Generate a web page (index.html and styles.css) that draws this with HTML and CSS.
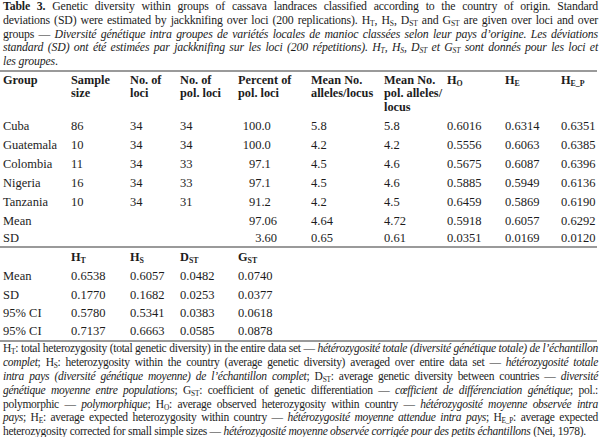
FILE: index.html
```html
<!DOCTYPE html>
<html>
<head>
<meta charset="utf-8">
<link rel="stylesheet" href="styles.css">
</head>
<body>
<div class="page">
  <p class="caption">
    <span class="ln"><b>Table 3.</b> Genetic diversity within groups of cassava landraces classified according to the country of origin. Standard</span>
    <span class="ln">deviations (SD) were estimated by jackknifing over loci (200 replications). H<sub>T</sub>, H<sub>S</sub>, D<sub>ST</sub> and G<sub>ST</sub> are given over loci and over</span>
    <span class="ln">groups — <i>Diversité génétique intra groupes de variétés locales de manioc classées selon leur pays d’origine. Les déviations</i></span>
    <span class="ln"><i>standard (SD) ont été estimées par jackknifing sur les loci (200 répetitions). H<sub>T</sub>, H<sub>S</sub>, D<sub>ST</sub> et G<sub>ST</sub> sont donnés pour les loci et</i></span>
    <span class="last"><i>les groupes</i>.</span>
  </p>

  <table class="data">
    <colgroup>
      <col class="c1"><col class="c2"><col class="c3"><col class="c4"><col class="c5">
      <col class="c6"><col class="c7"><col class="c8"><col class="c9"><col class="c10">
    </colgroup>
    <thead>
      <tr class="head">
        <th>Group</th>
        <th>Sample size</th>
        <th>No. of loci</th>
        <th>No. of pol. loci</th>
        <th>Percent of pol. loci</th>
        <th>Mean No. alleles/locus</th>
        <th>Mean No. pol. alleles/ locus</th>
        <th>H<sub>O</sub></th>
        <th>H<sub>E</sub></th>
        <th>H<sub>E_P</sub></th>
      </tr>
    </thead>
    <tbody class="groups">
      <tr><td>Cuba</td><td>86</td><td>34</td><td>34</td><td class="num d1">100.0</td><td>5.8</td><td>5.8</td><td>0.6016</td><td>0.6314</td><td>0.6351</td></tr>
      <tr><td>Guatemala</td><td>10</td><td>34</td><td>34</td><td class="num d1">100.0</td><td>4.2</td><td>4.2</td><td>0.5556</td><td>0.6063</td><td>0.6385</td></tr>
      <tr><td>Colombia</td><td>11</td><td>34</td><td>33</td><td class="num d1">97.1</td><td>4.5</td><td>4.6</td><td>0.5675</td><td>0.6087</td><td>0.6396</td></tr>
      <tr><td>Nigeria</td><td>16</td><td>34</td><td>33</td><td class="num d1">97.1</td><td>4.5</td><td>4.6</td><td>0.5885</td><td>0.5949</td><td>0.6136</td></tr>
      <tr><td>Tanzania</td><td>10</td><td>34</td><td>31</td><td class="num d1">91.2</td><td>4.2</td><td>4.5</td><td>0.6459</td><td>0.5869</td><td>0.6190</td></tr>
      <tr><td>Mean</td><td></td><td></td><td></td><td class="num">97.06</td><td>4.64</td><td>4.72</td><td>0.5918</td><td>0.6057</td><td>0.6292</td></tr>
      <tr class="end"><td>SD</td><td></td><td></td><td></td><td class="num">3.60</td><td>0.65</td><td>0.61</td><td>0.0351</td><td>0.0169</td><td>0.0120</td></tr>
    </tbody>
    <tbody class="overall">
      <tr class="subhead"><td></td><th>H<sub>T</sub></th><th>H<sub>S</sub></th><th>D<sub>ST</sub></th><th>G<sub>ST</sub></th><td colspan="5"></td></tr>
      <tr class="first"><td>Mean</td><td>0.6538</td><td>0.6057</td><td>0.0482</td><td>0.0740</td><td colspan="5"></td></tr>
      <tr><td>SD</td><td>0.1770</td><td>0.1682</td><td>0.0253</td><td>0.0377</td><td colspan="5"></td></tr>
      <tr><td>95% CI</td><td>0.5780</td><td>0.5341</td><td>0.0383</td><td>0.0618</td><td colspan="5"></td></tr>
      <tr class="end"><td>95% CI</td><td>0.7137</td><td>0.6663</td><td>0.0585</td><td>0.0878</td><td colspan="5"></td></tr>
    </tbody>
  </table>

  <p class="notes">
    <span class="ln">H<sub>T</sub>: total heterozygosity (total genetic diversity) in the entire data set — <i>hétérozygosité totale (diversité génétique totale) de l’échantillon</i></span>
    <span class="ln"><i>complet</i>; H<sub>S</sub>: heterozygosity within the country (average genetic diversity) averaged over entire data set — <i>hétérozygosité totale</i></span>
    <span class="ln"><i>intra pays (diversité génétique moyenne) de l’échantillon complet</i>; D<sub>ST</sub>: average genetic diversity between countries — <i>diversité</i></span>
    <span class="ln"><i>génétique moyenne entre populations</i>; G<sub>ST</sub>: coefficient of genetic differentiation — <i>cœfficient de différenciation génétique</i>; pol.:</span>
    <span class="ln">polymorphic — <i>polymorphique</i>; H<sub>O</sub>: average observed heterozygosity within country — <i>hétérozygosité moyenne observée intra</i></span>
    <span class="ln"><i>pays</i>; H<sub>E</sub>: average expected heterozygosity within country — <i>hétérozygosité moyenne attendue intra pays</i>; H<sub>E_P</sub>: average expected</span>
    <span class="last">heterozygosity corrected for small simple sizes — <i>hétérozygosité moyenne observée corrigée pour des petits échantillons</i> (Nei, 1978).</span>
  </p>
</div>
</body>
</html>
```
FILE: styles.css
```css
html, body {
  margin: 0;
  padding: 0;
  background: #fff;
}
.page {
  padding: 0 2px 0 3px;
  font-family: "Liberation Serif", "Times New Roman", serif;
  color: #1c1c1c;
}
sub {
  font-size: 0.64em;
  vertical-align: -0.25em;
  line-height: 0;
}
.caption, .notes {
  margin: 0;
}
.caption {
  font-size: 11.8px;
  letter-spacing: -0.15px;
  line-height: 13.8px;
  padding-bottom: 1px;
}
.ln {
  display: block;
  white-space: nowrap;
  text-align: justify;
  text-align-last: justify;
}
.last {
  display: block;
}
.data {
  width: 597px;
  margin-left: -3px;
  border-collapse: collapse;
  table-layout: fixed;
  font-size: 12.5px;
  border-top: 2px solid #9a9a9a;
}
.c1 { width: 71px; }
.c2 { width: 59px; }
.c3 { width: 50px; }
.c4 { width: 58px; }
.c5 { width: 73px; }
.c6 { width: 73px; }
.c7 { width: 63px; }
.c8 { width: 58px; }
.c9 { width: 56px; }
.c10 { width: 36px; }
.data th, .data td {
  padding: 0;
  text-align: left;
  vertical-align: middle;
  white-space: nowrap;
}
.data th:first-child, .data td:first-child {
  padding-left: 3px;
}
.head th {
  font-size: 12.3px;
  font-weight: bold;
  white-space: normal;
  vertical-align: top;
  line-height: 13.5px;
  padding-top: 2px;
  padding-bottom: 3px;
  height: 40px;
}
.head th:nth-child(2) { padding-right: 16px; }
.head th:nth-child(3) { padding-right: 12px; }
.head th:nth-child(4) { padding-right: 8px; }
.data td {
  height: 19px;
  line-height: 19px;
}
.data .num {
  text-align: right;
  padding-right: 34px;
}
.data .num.d1 {
  padding-right: calc(34px + 1ch);
}
.groups .end td {
  height: 14px;
  line-height: 14px;
  padding-bottom: 1px;
}
.overall {
  border-top: 2px solid #9a9a9a;
}
.subhead th {
  font-size: 12.3px;
  font-weight: bold;
  height: 19px;
  line-height: 19px;
}
.overall td {
  height: 18px;
  line-height: 18px;
}
.overall .first td {
  height: 19px;
  line-height: 19px;
}
.overall .end {
  border-bottom: 2px solid #9a9a9a;
}
.notes {
  padding-top: 0;
  font-size: 11.5px;
  letter-spacing: -0.26px;
  line-height: 13.8px;
}
```
